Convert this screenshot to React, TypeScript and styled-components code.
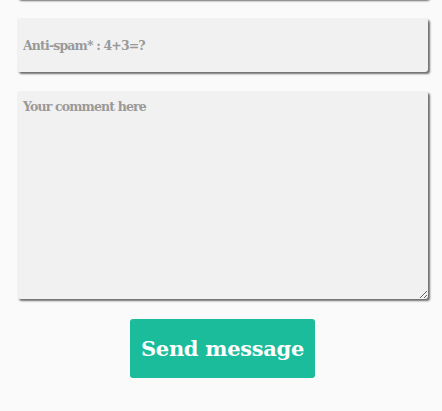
import React from "react";
import styled, { createGlobalStyle } from "styled-components";

const Global = createGlobalStyle`
  html, body { margin: 0; padding: 0; background: #fafafa; }
  body { font-family: "DejaVu Serif", "Liberation Serif", serif; }
`;

const Form = styled.form`
  display: flex;
  flex-direction: column;
  align-items: flex-start;
  padding: 0 0 0 17px;
  margin-top: -55px;
`;

const fieldBase = `
  box-sizing: border-box;
  width: 411px;
  background: #f1f1f1;
  border: none;
  border-radius: 3px;
  box-shadow: 2px 2px 2px #6f6f6f;
  font-family: "DejaVu Serif", "Liberation Serif", serif;
  font-weight: bold;
  font-size: 12.5px;
  letter-spacing: -0.85px;
  color: #555;
  outline: none;
  &::placeholder { color: #999; opacity: 1; }
`;

const Input = styled.input`
  ${fieldBase}
  height: 54px;
  padding: 0 6px;
  margin-bottom: 19px;
`;

const TextArea = styled.textarea`
  ${fieldBase}
  display: block;
  height: 208px;
  padding: 8px 6px;
  margin-bottom: 20px;
  resize: both;
`;

const Actions = styled.div`
  width: 411px;
  display: flex;
  justify-content: center;
`;

const Button = styled.button`
  box-sizing: border-box;
  width: 185px;
  height: 59px;
  background: #1abc9c;
  color: #fff;
  border: none;
  border-radius: 3px;
  font-family: "DejaVu Serif", "Liberation Serif", serif;
  font-weight: bold;
  font-size: 21px;
  letter-spacing: -0.3px;
  cursor: pointer;
  padding: 0;
`;

export default function App() {
  return (
    <>
      <Global />
      <Form onSubmit={(e) => e.preventDefault()}>
        <Input type="text" placeholder="Email*" />
        <Input type="text" placeholder="Anti-spam* : 4+3=?" />
        <TextArea placeholder="Your comment here" />
        <Actions>
          <Button type="submit">Send message</Button>
        </Actions>
      </Form>
    </>
  );
}
